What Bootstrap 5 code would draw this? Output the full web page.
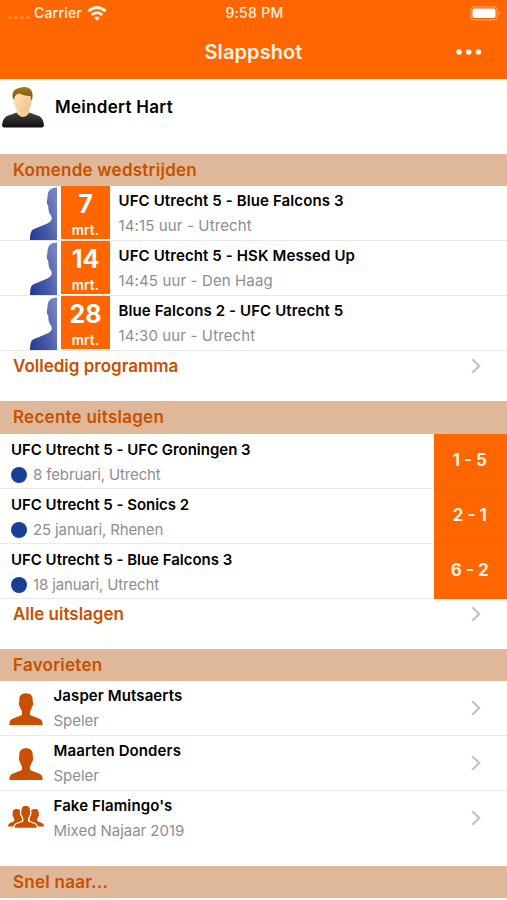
<!DOCTYPE html>
<html lang="nl">
<head>
<meta charset="utf-8">
<meta name="viewport" content="width=device-width, initial-scale=1">
<title>Slappshot</title>
<link href="https://cdn.jsdelivr.net/npm/bootstrap@5.3.0/dist/css/bootstrap.min.css" rel="stylesheet">
<style>
body{font-family:Inter,"Liberation Sans",sans-serif;color:#000;background:#fff;overflow:hidden}
.app{height:900px;overflow:hidden}
.top-area{height:79px;background:#f60;color:#fff4e6}
.status{height:26px;font-size:14px;font-weight:500;padding:0 6px 0 8px;line-height:26px}
.status>div{flex:1 1 0}
.status .clock{font-size:14px;text-align:center;letter-spacing:.3px}
.carrier{letter-spacing:.2px}
.signal{gap:2px;padding-top:8px;margin-right:4px}
.signal i{width:4px;height:3px;border-radius:50%;background:#ff8c3e}
.title-bar{height:53px}
.title-bar h1{font-size:20px;font-weight:600;line-height:53px;margin:0;letter-spacing:.1px}
.more{right:25px;top:23px}
.profile{height:74.5px;padding:7px 0 0 1px}
.profile strong{font-size:17px;font-weight:600;line-height:42px;margin-left:10px;letter-spacing:.3px}
.section-title{height:32.5px;line-height:32px;background:#deb898;color:#c85000;font-size:17px;font-weight:600;padding-left:13px;margin:0;letter-spacing:.25px}
.line{height:55px;border-bottom:1px solid #e9e9e9}
.name{font-size:15px;font-weight:600;line-height:20px;white-space:nowrap;letter-spacing:.11px}
.sub{font-size:15px;color:#8e8e8e;line-height:20px;margin-top:5px;white-space:nowrap}
.info{padding-top:4.500px}
.match .info{margin-left:8.500px}
.match .sub{letter-spacing:.13px}
.shade{margin:1px 4px 0 30px}
.date{width:49px;height:53px;background:#f60;color:#fff;text-align:center}
.date b{display:block;font-size:25px;font-weight:700;line-height:37px}
.date span{display:block;font-size:13.500px;font-weight:600;line-height:14px;letter-spacing:.2px}
.result .info{padding:6px 0 0 11px}
.result .name{letter-spacing:-.02px}
.result .sub{letter-spacing:-.13px}
.dot{width:16px;height:16px;border-radius:50%;background:#173f94;margin-right:6px}
.score{width:73.5px;background:#f60;color:#fff1df;font-weight:700;font-size:17px;margin-bottom:-1px;border-bottom:1px solid #f46407;padding-right:1px}
.more-link{height:50px;padding:0 26px 0 13px;color:#c85000;font-size:17px;font-weight:600;line-height:30px}
.fav{padding:0 26px 0 8px}
.fav .info{margin-left:9.500px}
.fav .sub{letter-spacing:-.03px}
.fav.final{height:74.5px;border:0}
.fav.final>.crew{margin-top:14px}
.figure-icon{margin:11px 0 0}
.chev{margin-top:7px}
.fav .chev{margin-top:19px}
</style>
</head>
<body>
<svg width="0" height="0" class="position-absolute">
<defs>
<linearGradient id="blue" x1="0" y1=".9" x2="1" y2=".35"><stop offset="0" stop-color="#223b94"/><stop offset=".55" stop-color="#4a5da9"/><stop offset="1" stop-color="#7582c0"/></linearGradient>
<linearGradient id="hair" x2="0" y2="1"><stop stop-color="#a87a18"/><stop offset="1" stop-color="#725010"/></linearGradient>
<linearGradient id="skin" x2="1" y2="1"><stop stop-color="#ffe8c2"/><stop offset="1" stop-color="#f0bd86"/></linearGradient>
<linearGradient id="shirt" x2="0" y2="1"><stop stop-color="#444"/><stop offset="1" stop-color="#101010"/></linearGradient>
<symbol id="half" viewBox="0 0 27 53"><path fill="url(#blue)" d="M27 .5C20 .5 17.500 4 17.500 11c-1.200 3-.8 6 .8 8 0 5 1 8 3 10 1.200 3.500 0 5.500-4 7.500L3 42.500Q0 44 0 53H27Z"/></symbol>
<symbol id="person" viewBox="0 0 34 32"><path fill="#c85000" d="M17 .3C11.500.3 10 3.500 10.300 8.500c-.8.7-.5 4.500.8 5.500.3 2 1 3.300 1.900 4.300V22L3.500 25.800C1 26.800.4 28.500.4 32h33.200c0-3.500-.6-5.200-3.100-6.200L21 22v-3.700c.9-1 1.600-2.300 1.900-4.300 1.300-1 1.600-4.800.8-5.500C24 3.500 22.500.3 17 .3Z"/></symbol>
<symbol id="go" viewBox="0 0 10 16"><path d="m1.200 1.200 7 6.800-7 6.800" fill="none" stroke="#c2c2c2" stroke-width="2.200"/></symbol>
</defs>
</svg>
<main class="app">
<header class="top-area">
<div class="status d-flex align-items-center">
<div class="d-flex align-items-center"><span class="signal d-flex"><i></i><i></i><i></i><i></i></span><span class="carrier">Carrier</span>
<svg style="margin-left:5px" width="20" height="15" viewBox="0 0 18 14" fill="none" stroke="#fff4e6" stroke-width="2.600"><path d="M1 4.800Q9-2 17 4.800M4 8.300q5-4.200 10 0"/><path d="M6.300 10.900Q9 8.700 11.700 10.900L9 13.800Z" fill="#fff4e6" stroke="none"/></svg></div>
<div class="clock">9:58 PM</div>
<div class="d-flex justify-content-end"><svg width="31" height="15" viewBox="0 0 31 15"><rect x=".8" y=".8" width="26.400" height="13" rx="3.500" fill="none" stroke="#ff9c5c" stroke-width="1.200"/><rect x="2.500" y="2.500" width="23" height="9.600" rx="2" fill="#fff"/><path d="M28.500 5.200q2 2 0 4.400" fill="#ffb98c"/></svg></div>
</div>
<div class="title-bar text-center position-relative"><h1>Slappshot</h1><svg class="more position-absolute" width="26" height="6" viewBox="0 0 26 6" fill="#fff4e6"><circle cx="3" cy="3" r="2.800"/><circle cx="12.700" cy="3" r="2.800"/><circle cx="22.400" cy="3" r="2.800"/></svg></div>
</header>
<section class="profile d-flex align-items-start">
<svg width="44" height="43" viewBox="0 0 44 43"><path fill="url(#shirt)" d="M1 39Q2 30 9 29l8-3h10l8 3q7 1 8 10 0 2-2 2.500H3Q1 41 1 39Z"/><path fill="url(#skin)" d="M15 26q7 10 14 0l-2-4H17Z"/><path fill="url(#skin)" d="M13 10q-1 15 9 17 10-2 8-17-2-6-8-7-7 1-9 7Z"/><path fill="url(#hair)" d="M12.500 14Q9 4 18 2q8-3 12 2 3 4 .5 11l-1-5q-7-.5-11-2.500-4 1-4.500 3Z"/></svg>
<strong>Meindert Hart</strong>
</section>
<h2 class="section-title">Komende wedstrijden</h2>
<div class="line match d-flex"><svg class="shade flex-shrink-0" width="27" height="53"><use href="#half"/></svg><div class="date"><b>7</b><span>mrt.</span></div><div class="info"><div class="name">UFC Utrecht 5 - Blue Falcons 3</div><div class="sub">14:15 uur - Utrecht</div></div></div>
<div class="line match d-flex"><svg class="shade flex-shrink-0" width="27" height="53"><use href="#half"/></svg><div class="date"><b>14</b><span>mrt.</span></div><div class="info"><div class="name">UFC Utrecht 5 - HSK Messed Up</div><div class="sub">14:45 uur - Den Haag</div></div></div>
<div class="line match d-flex"><svg class="shade flex-shrink-0" width="27" height="53"><use href="#half"/></svg><div class="date"><b>28</b><span>mrt.</span></div><div class="info"><div class="name">Blue Falcons 2 - UFC Utrecht 5</div><div class="sub">14:30 uur - Utrecht</div></div></div>
<div class="more-link d-flex justify-content-between"><span>Volledig programma</span><svg class="chev" width="10" height="16"><use href="#go"/></svg></div>
<h2 class="section-title">Recente uitslagen</h2>
<div class="line result d-flex justify-content-between"><div class="info"><div class="name">UFC Utrecht 5 - UFC Groningen 3</div><div class="sub d-flex align-items-center"><span class="dot"></span>8 februari, Utrecht</div></div><div class="score d-flex align-items-center justify-content-center">1 - 5</div></div>
<div class="line result d-flex justify-content-between"><div class="info"><div class="name">UFC Utrecht 5 - Sonics 2</div><div class="sub d-flex align-items-center"><span class="dot"></span>25 januari, Rhenen</div></div><div class="score d-flex align-items-center justify-content-center">2 - 1</div></div>
<div class="line result d-flex justify-content-between"><div class="info"><div class="name">UFC Utrecht 5 - Blue Falcons 3</div><div class="sub d-flex align-items-center"><span class="dot"></span>18 januari, Utrecht</div></div><div class="score d-flex align-items-center justify-content-center">6 - 2</div></div>
<div class="more-link d-flex justify-content-between"><span>Alle uitslagen</span><svg class="chev" width="10" height="16"><use href="#go"/></svg></div>
<h2 class="section-title">Favorieten</h2>
<div class="line fav d-flex"><svg class="figure-icon" width="36" height="34" viewBox="-1 -1 36 34"><use href="#person" width="34" height="32"/></svg><div class="info flex-grow-1"><div class="name">Jasper Mutsaerts</div><div class="sub">Speler</div></div><svg class="chev" width="10" height="16"><use href="#go"/></svg></div>
<div class="line fav d-flex"><svg class="figure-icon" width="36" height="34" viewBox="-1 -1 36 34"><use href="#person" width="34" height="32"/></svg><div class="info flex-grow-1"><div class="name">Maarten Donders</div><div class="sub">Speler</div></div><svg class="chev" width="10" height="16"><use href="#go"/></svg></div>
<div class="line fav final d-flex"><svg class="crew" width="36" height="26" viewBox="0 0 36 26"><path fill="#c85000" d="M8.500 4C5.500 4 4.500 6 4.700 9c-.4 1 0 2.500.7 3l1 2.500V16L2 18q-2 .8-2 3.500h9l5-3V7Q12 4 8.500 4ZM27 4c3 0 4 2 3.800 5 .4 1 0 2.500-.7 3l-1 2.500V16l4.900 2q2 .8 2 3.500h-9.500l-5-3V7Q23.500 4 27 4Z"/><path fill="#c85000" stroke="#fff" stroke-width="1.300" d="M17.700.2C13.500.2 12.500 3 12.800 6.700c-.7.700-.3 3.300.7 4l1.200 3V16L8.500 18.500Q6 19.500 6 23.500h23.500q0-4-2.500-5L20.700 16v-2.300l1.200-3c1-.7 1.400-3.300.7-4C22.900 3 21.900.2 17.700.2Z"/></svg><div class="info flex-grow-1"><div class="name">Fake Flamingo's</div><div class="sub">Mixed Najaar 2019</div></div><svg class="chev" width="10" height="16"><use href="#go"/></svg></div>
<h2 class="section-title">Snel naar...</h2>
</main>
<script src="https://cdn.jsdelivr.net/npm/bootstrap@5.3.0/dist/js/bootstrap.bundle.min.js"></script>
</body>
</html>
